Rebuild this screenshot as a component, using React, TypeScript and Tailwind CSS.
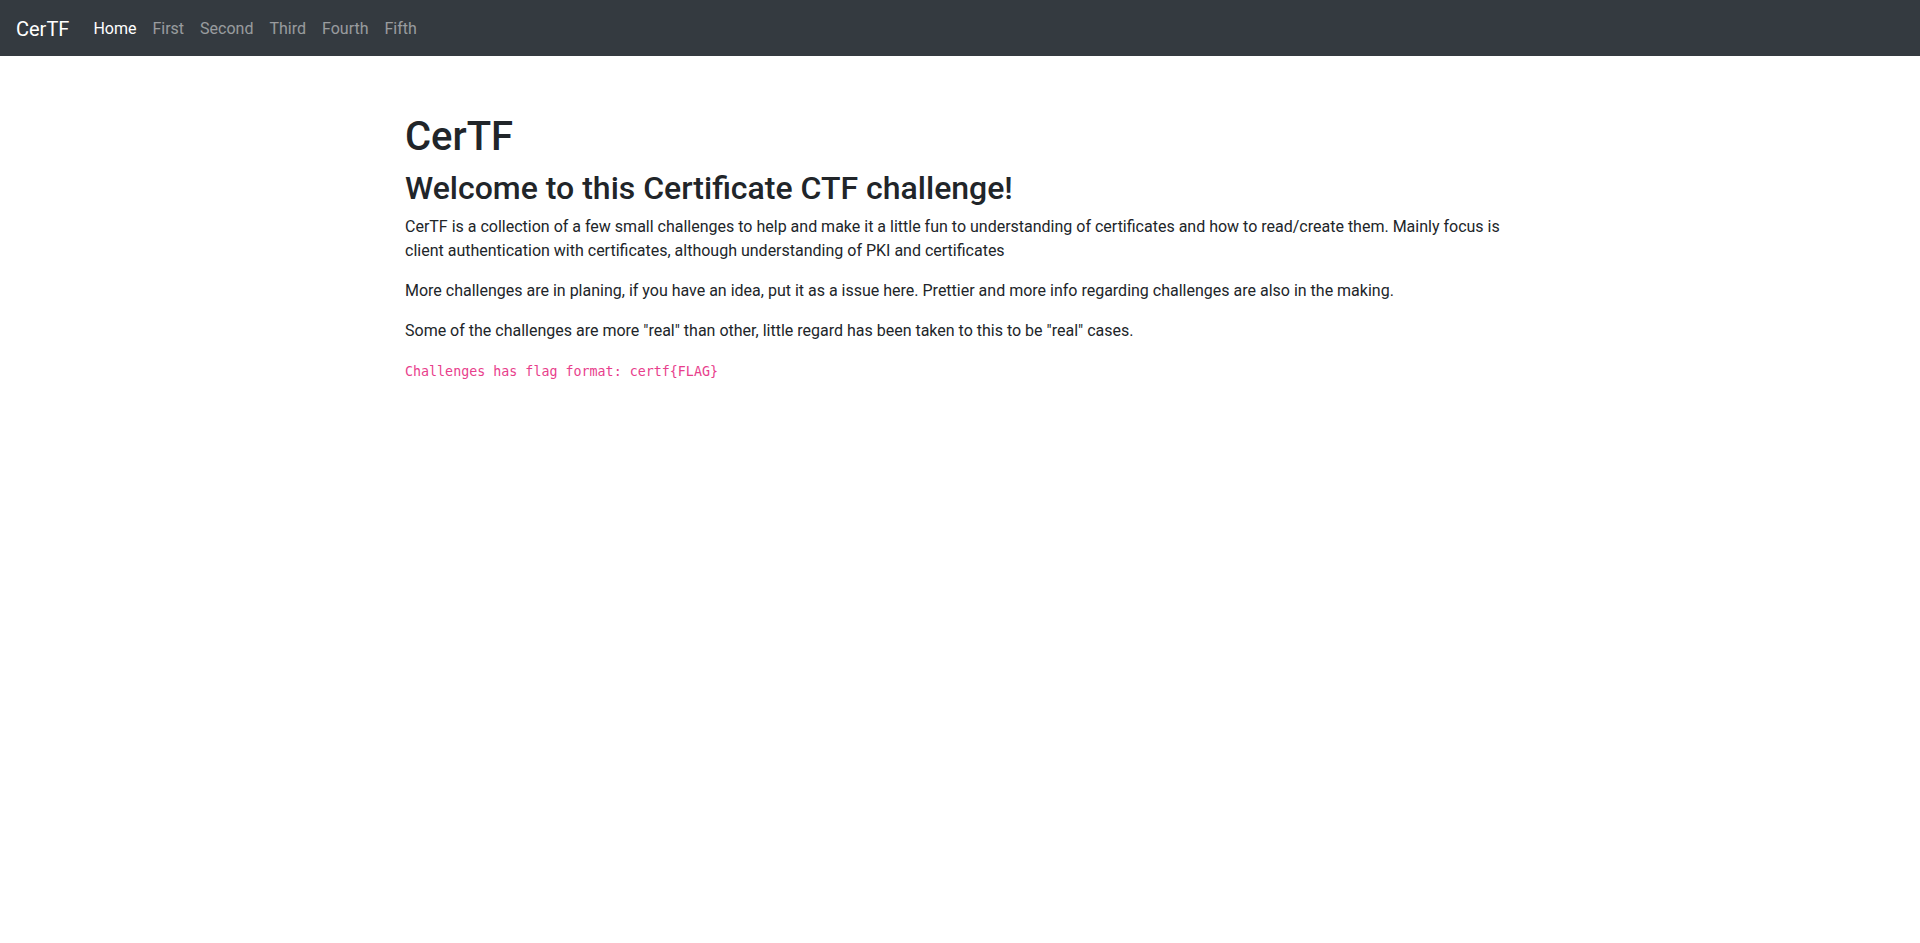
import React from "react";

const links = ["First", "Second", "Third", "Fourth", "Fifth"];

const App = () => {
  return (
    <div className="min-h-screen bg-white text-[#212529] font-['Roboto','Liberation_Sans',sans-serif] text-base leading-6">
      <nav className="bg-[#343a40] flex items-center px-4 py-2">
        <a href="#" className="text-white text-xl leading-[30px] pt-[6px] pb-[4px] mr-4">
          CerTF
        </a>
        <ul className="flex flex-row">
          <li>
            <a href="#" className="block px-2 pt-[9px] pb-[7px] text-white">
              Home
            </a>
          </li>
          {links.map((l) => (
            <li key={l}>
              <a href="#" className="block px-2 pt-[9px] pb-[7px] text-white/50">
                {l}
              </a>
            </li>
          ))}
        </ul>
      </nav>
      <main className="max-w-[1140px] mx-auto px-[15px] pt-[57px]">
        <h1 className="text-[40px] leading-[48px] font-medium mb-2">CerTF</h1>
        <h2 className="text-[32px] leading-[38.4px] font-medium mb-2">
          Welcome to this Certificate CTF challenge!
        </h2>
        <p className="mb-4">
          CerTF is a collection of a few small challenges to help and make it a little fun to
          understanding of certificates and how to read/create them. Mainly focus is client
          authentication with certificates, although understanding of PKI and certificates
        </p>
        <p className="mb-4">
          More challenges are in planing, if you have an idea, put it as a issue here. Prettier and
          more info regarding challenges are also in the making.
        </p>
        <p className="mb-4">
          Some of the challenges are more "real" than other, little regard has been taken to this to
          be "real" cases.
        </p>
        <p className="mb-4">
          <code className="text-[13.33px] text-[#e83e8c] font-['DejaVu_Sans_Mono',monospace]">
            Challenges has flag format: certf{"{"}FLAG{"}"}
          </code>
        </p>
      </main>
    </div>
  );
};

export default App;
